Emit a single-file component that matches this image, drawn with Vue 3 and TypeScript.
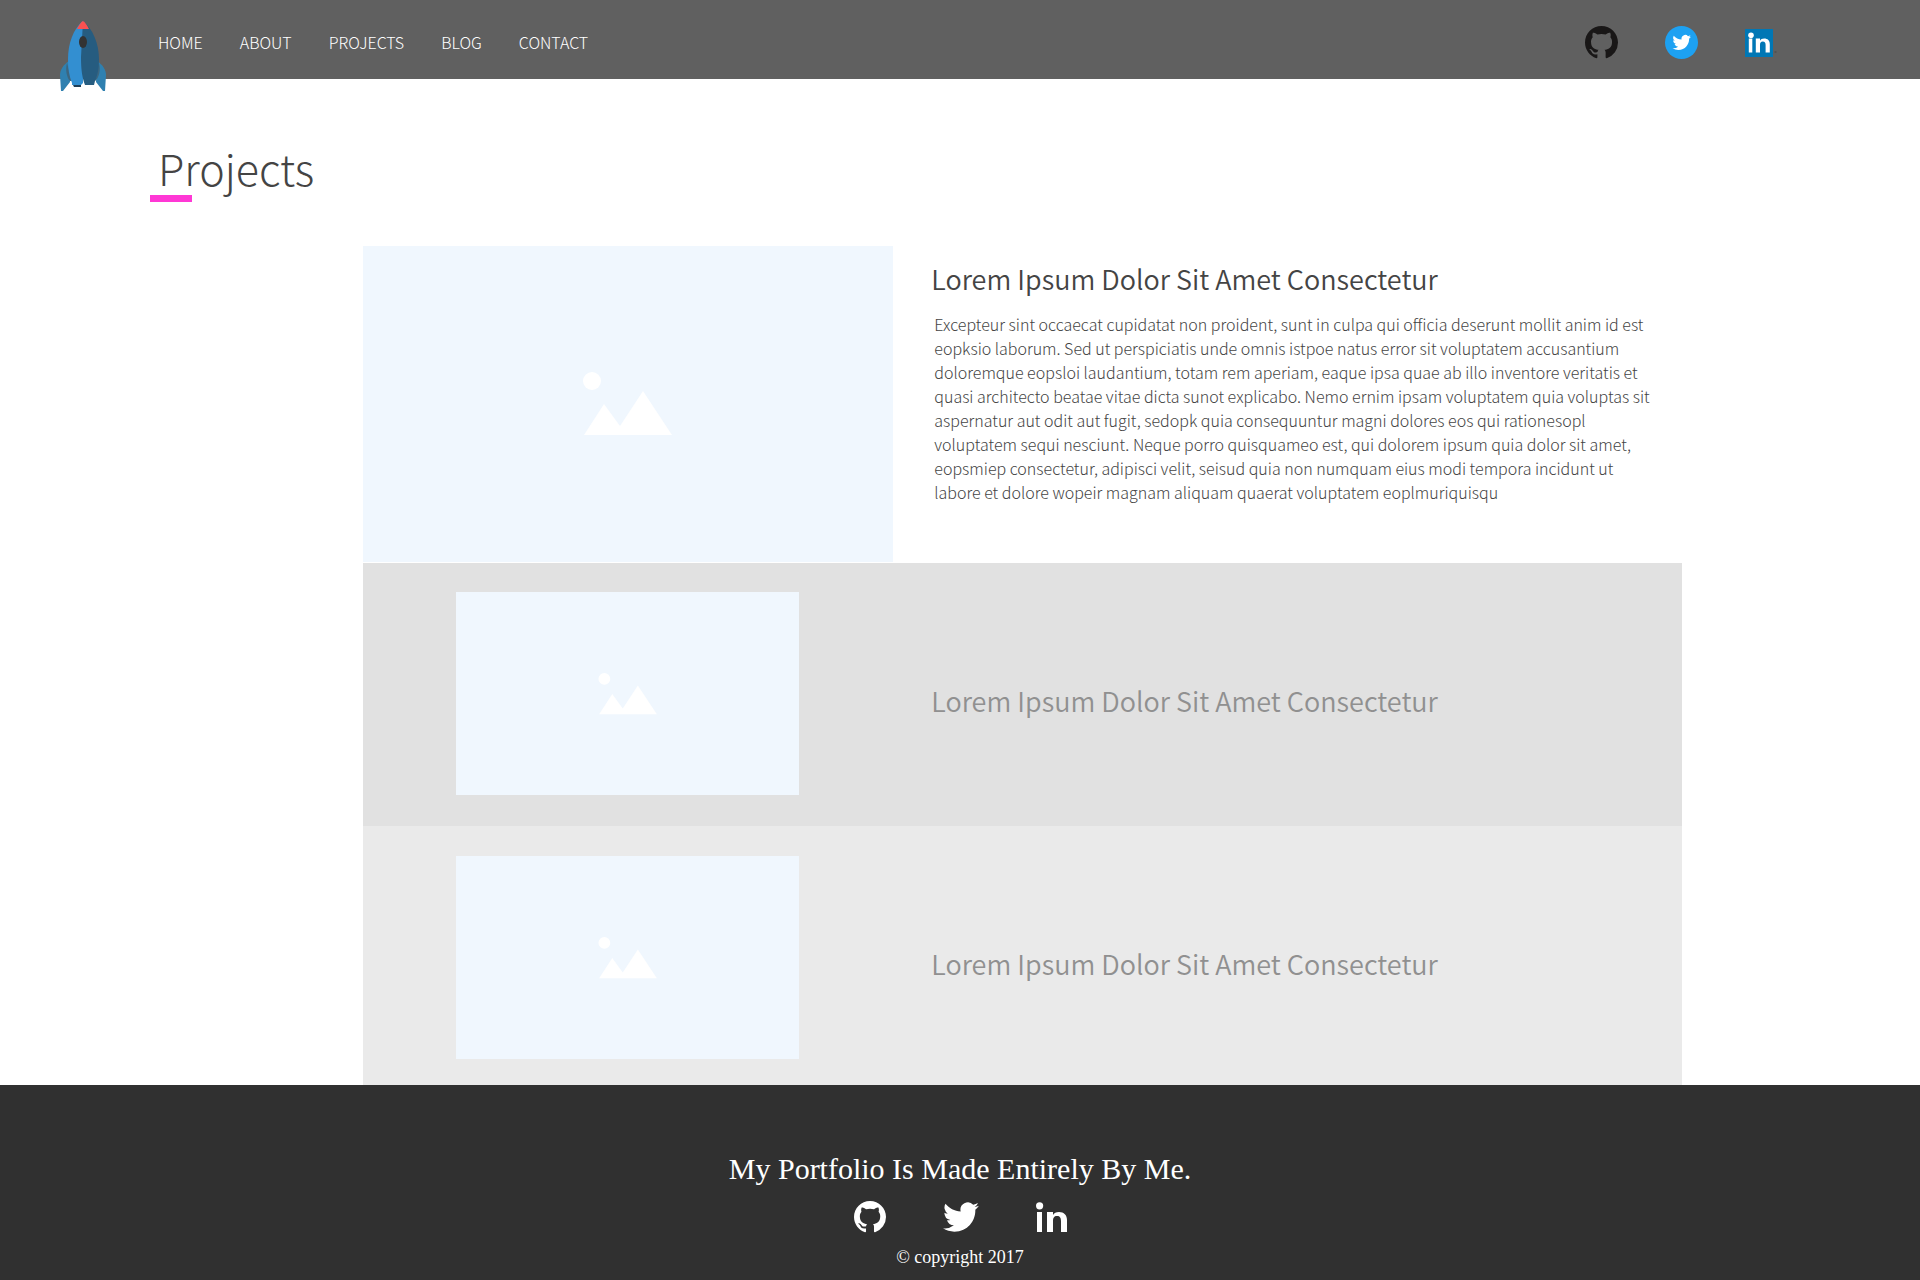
<script setup lang="ts">
interface Link {
  label: string
  href: string
}

interface Project {
  id: number
  title: string
  tone: string
}

const links: Link[] = [
  { label: 'HOME', href: '#home' },
  { label: 'ABOUT', href: '#about' },
  { label: 'PROJECTS', href: '#projects' },
  { label: 'BLOG', href: '#blog' },
  { label: 'CONTACT', href: '#contact' },
]

const title = 'Lorem Ipsum Dolor Sit Amet Consectetur'

const lines: string[] = [
  'Excepteur sint occaecat cupidatat non proident, sunt in culpa qui officia deserunt mollit anim id est',
  'eopksio laborum. Sed ut perspiciatis unde omnis istpoe natus error sit voluptatem accusantium',
  'doloremque eopsloi laudantium, totam rem aperiam, eaque ipsa quae ab illo inventore veritatis et',
  'quasi architecto beatae vitae dicta sunot explicabo. Nemo ernim ipsam voluptatem quia voluptas sit',
  'aspernatur aut odit aut fugit, sedopk quia consequuntur magni dolores eos qui rationesopl',
  'voluptatem sequi nesciunt. Neque porro quisquameo est, qui dolorem ipsum quia dolor sit amet,',
  'eopsmiep consectetur, adipisci velit, seisud quia non numquam eius modi tempora incidunt ut',
  'labore et dolore wopeir magnam aliquam quaerat voluptatem eoplmuriquisqu',
]

const others: Project[] = [
  { id: 2, title, tone: 'mid' },
  { id: 3, title, tone: 'pale' },
]

const githubPath =
  'M8 0C3.58 0 0 3.58 0 8c0 3.54 2.29 6.53 5.47 7.59.4.07.55-.17.55-.38 0-.19-.01-.82-.01-1.49-2.01.37-2.53-.49-2.69-.94-.09-.23-.48-.94-.82-1.13-.28-.15-.68-.52-.01-.53.63-.01 1.08.58 1.23.82.72 1.21 1.87.87 2.33.66.07-.52.28-.87.51-1.07-1.78-.2-3.64-.89-3.64-3.95 0-.87.31-1.59.82-2.15-.08-.2-.36-1.02.08-2.12 0 0 .67-.21 2.2.82.64-.18 1.32-.27 2-.27s1.36.09 2 .27c1.53-1.04 2.2-.82 2.2-.82.44 1.1.16 1.92.08 2.12.51.56.82 1.27.82 2.15 0 3.07-1.87 3.75-3.65 3.95.29.25.54.73.54 1.48 0 1.07-.01 1.93-.01 2.2 0 .21.15.46.55.38A8.01 8.01 0 0 0 16 8c0-4.42-3.58-8-8-8z'
const birdPath =
  'M23.95 4.57a10 10 0 0 1-2.82.77 4.96 4.96 0 0 0 2.16-2.72c-.95.55-2 .95-3.13 1.18a4.92 4.92 0 0 0-8.38 4.48C7.69 8.1 4.07 6.13 1.64 3.16a4.92 4.92 0 0 0 1.52 6.57 4.9 4.9 0 0 1-2.23-.61v.06a4.92 4.92 0 0 0 3.95 4.83 5 5 0 0 1-2.21.08 4.94 4.94 0 0 0 4.6 3.42A9.87 9.87 0 0 1 0 19.54a13.99 13.99 0 0 0 7.55 2.21c9.05 0 14-7.5 14-13.98 0-.21 0-.42-.02-.63a9.94 9.94 0 0 0 2.42-2.57z'
const inPath =
  'M2 10h5v20H2zM12 10h6v3c1-2 3-3 6-3 5 0 8 3 8 8v12h-6V19c0-3-1-5-4-5s-4 2-4 5v11h-6z'
</script>

<template>
  <div class="page">
    <header class="header">
      <a class="logo" href="#home" aria-label="Home">
        <svg viewBox="0 0 46 70" width="46" height="70">
          <path d="M9 40C3 44 0 49 0 54L1 70H3L10 61ZM37 40c6 4 9 9 9 14l-1 16h-2l-7-9Z" fill="#2f80b0" />
          <path d="M7 42C5 49 7 57 10 60L12 60ZM39 42c2 7 0 15-4 18l-1-4Z" fill="#3c6680" />
          <path d="M13 64h8v2h-7Z" fill="#1f3f58" />
          <path d="M23 0C13 8 8 23 8 38c0 9 1 17 4 24v2h9l2-2Z" fill="#338fd1" />
          <path d="M23 0c10 8 16 23 16 38 0 8-1 15-4 22l-1 4h-9c-3-8-4-16-4-28Z" fill="#265c80" />
          <path d="M17 8C19 4 21 1 23 0c2 1 4 4 6 8Z" fill="#fb5151" />
          <ellipse cx="23" cy="21" rx="4" ry="6" fill="#333" />
        </svg>
      </a>
      <nav class="nav" aria-label="Main">
        <a v-for="link in links" :key="link.label" :href="link.href">{{ link.label }}</a>
      </nav>
      <div class="social">
        <a href="#github" aria-label="GitHub">
          <svg viewBox="0 0 16 16" width="33" height="33"><path :d="githubPath" fill="#191717" /></svg>
        </a>
        <a href="#twitter" aria-label="Twitter">
          <svg viewBox="0 0 33 33" width="33" height="33">
            <circle cx="16.5" cy="16.5" r="16.5" fill="#1da1f2" />
            <path :d="birdPath" transform="translate(7.5 7.2) scale(.77)" fill="#fff" />
          </svg>
        </a>
        <a href="#linkedin" aria-label="LinkedIn">
          <svg viewBox="0 0 33 28" width="33" height="28">
            <rect width="28" height="28" fill="#0077b5" />
            <circle cx="6" cy="6.2" r="2.8" fill="#fff" />
            <path :d="inPath" transform="translate(2.4 2.6) scale(.7)" fill="#fff" />
            <path d="M29.5 22.5h2v1h-2z" fill="#444" />
          </svg>
        </a>
      </div>
    </header>

    <main class="main">
      <h1 class="heading">Projects</h1>

      <section class="projects">
        <article class="project lead">
          <div class="thumb">
            <svg viewBox="0 0 90 64" width="90" height="64">
              <circle cx="9" cy="9" r="9" fill="#fff" />
              <path d="M1 63 21 32 37 54 60 19 89 63Z" fill="#fff" />
            </svg>
          </div>
          <div class="copy">
            <h2 class="title">{{ title }}</h2>
            <p class="text">
              <template v-for="line in lines" :key="line">{{ line }}<br /></template>
            </p>
          </div>
        </article>

        <article v-for="project in others" :key="project.id" class="project" :class="project.tone">
          <div class="thumb">
            <svg viewBox="0 0 90 64" width="60" height="42">
              <circle cx="9" cy="9" r="9" fill="#fff" />
              <path d="M1 63 21 32 37 54 60 19 89 63Z" fill="#fff" />
            </svg>
          </div>
          <h2 class="title">{{ project.title }}</h2>
        </article>
      </section>
    </main>

    <footer class="footer">
      <p class="tagline">My Portfolio Is Made Entirely By Me.</p>
      <div class="marks">
        <a href="#github" aria-label="GitHub">
          <svg viewBox="0 0 16 16" width="32" height="32"><path :d="githubPath" fill="#fff" /></svg>
        </a>
        <a href="#twitter" aria-label="Twitter">
          <svg viewBox="0 2.2 24 19.6" width="36" height="30"><path :d="birdPath" fill="#fff" /></svg>
        </a>
        <a href="#linkedin" aria-label="LinkedIn">
          <svg viewBox="1 0 31 30" width="31" height="30">
            <circle cx="4.6" cy="3.8" r="3.6" fill="#fff" />
            <path :d="inPath" fill="#fff" />
          </svg>
        </a>
      </div>
      <p class="copyright">© copyright 2017</p>
    </footer>
  </div>
</template>

<style>
body {
  margin: 0;
  background: #fff;
}
</style>

<style scoped>
.page {
  display: flex;
  flex-direction: column;
  min-height: 100vh;
  font-family: "Noto Sans CJK SC", "Noto Sans", sans-serif;
  font-weight: 300;
  color: #444;
}

h1,
h2,
p {
  margin: 0;
}

svg {
  display: block;
}

.header {
  display: flex;
  align-items: center;
  height: 79px;
  padding: 0 142px 0 60px;
  background: #606060;
}

.logo {
  align-self: flex-start;
  height: 58px;
  padding-top: 21px;
  margin-right: 52px;
}

.nav {
  display: flex;
  gap: 37px;
  padding-top: 4px;
}

.nav a {
  font-size: 16px;
  line-height: 24px;
  color: #fff;
  text-decoration: none;
}

.social {
  display: flex;
  align-items: center;
  gap: 47px;
  margin-left: auto;
  padding-top: 6px;
}

.main {
  flex: 1;
}

.heading {
  display: flex;
  flex-direction: column;
  padding: 60px 0 0 158px;
  font-size: 43px;
  line-height: 56px;
  font-weight: 300;
}

.heading::after {
  content: "";
  width: 42px;
  height: 7px;
  margin-left: -8px;
  background: #ff38d5;
}

.projects {
  padding: 44px 238px 0 363px;
}

.project {
  display: grid;
  grid-template-columns: 3fr 4fr;
  align-items: start;
}

.thumb {
  display: grid;
  place-items: center;
  height: 203px;
  margin: 29px 129px 0 93px;
  background: #f0f7fe;
}

.lead {
  height: 317px;
}

.lead .thumb {
  height: 316px;
  margin: 0 35px 0 0;
}

.mid {
  height: 263px;
  background: #e1e1e1;
}

.pale {
  height: 259px;
  background: #eaeaea;
}

.pale .thumb {
  margin-top: 30px;
}

.title {
  padding-left: 3px;
  font-size: 27px;
  line-height: 40px;
  font-weight: 350;
}

.mid .title,
.pale .title {
  padding-top: 118px;
  color: #909090;
}

.lead .title {
  padding-top: 13px;
}

.text {
  padding: 13px 0 0 6px;
  font-size: 16px;
  line-height: 24px;
  white-space: nowrap;
}

.footer {
  display: flex;
  flex-direction: column;
  align-items: center;
  padding: 64px 0 12px;
  background: #303030;
  color: #fff;
  font-family: "Liberation Serif", serif;
  font-weight: 400;
}

.tagline {
  font-size: 30px;
  line-height: 40px;
}

.marks {
  display: flex;
  align-items: center;
  gap: 57px;
  height: 32px;
  margin-top: 12px;
}

.copyright {
  margin-top: 12px;
  font-size: 18px;
  line-height: 24px;
}
</style>
